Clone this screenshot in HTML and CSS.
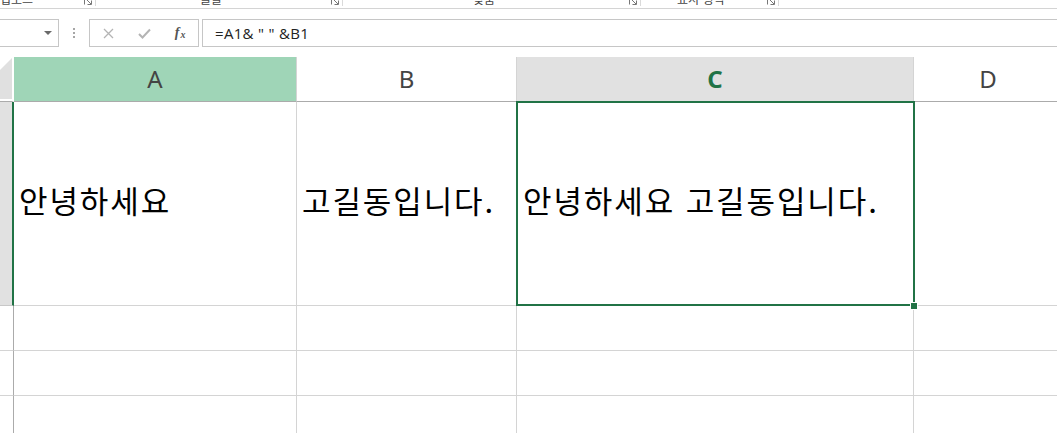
FILE: index.html
```html
<!DOCTYPE html>
<html lang="ko">
<head>
<meta charset="utf-8">
<title>Excel</title>
<link rel="stylesheet" href="styles.css">
</head>
<body>
<div class="ribbon">
  <div class="group g1"><span class="glabel">클립보드</span><span class="launcher"><svg width="8" height="8" viewBox="0 0 8 8"><path d="M0.5 7.5V0.5H7.5M7.5 3.5V7.5H3.5M3 3L7 7" fill="none" stroke="#777" stroke-width="1"/></svg></span></div>
  <div class="group g2"><span class="glabel">글꼴</span><span class="launcher"><svg width="8" height="8" viewBox="0 0 8 8"><path d="M0.5 7.5V0.5H7.5M7.5 3.5V7.5H3.5M3 3L7 7" fill="none" stroke="#777" stroke-width="1"/></svg></span></div>
  <div class="group g3"><span class="glabel">맞춤</span><span class="launcher"><svg width="8" height="8" viewBox="0 0 8 8"><path d="M0.5 7.5V0.5H7.5M7.5 3.5V7.5H3.5M3 3L7 7" fill="none" stroke="#777" stroke-width="1"/></svg></span></div>
  <div class="group g4"><span class="glabel">표시 형식</span><span class="launcher"><svg width="8" height="8" viewBox="0 0 8 8"><path d="M0.5 7.5V0.5H7.5M7.5 3.5V7.5H3.5M3 3L7 7" fill="none" stroke="#777" stroke-width="1"/></svg></span></div>
  <div class="group g5"></div>
</div>

<div class="fbar">
  <div class="namebox"><span class="caret"></span></div>
  <div class="grip"><i></i><i></i><i></i></div>
  <div class="fbtns">
    <span class="fbtn"><svg width="11" height="11" viewBox="0 0 11 11"><path d="M1 1L10 10M10 1L1 10" stroke="#b4b4b4" stroke-width="1.3" fill="none"/></svg></span>
    <span class="fbtn"><svg width="13" height="11" viewBox="0 0 13 11"><path d="M1 6L4.5 9.5L12 1.5" stroke="#b4b4b4" stroke-width="2" fill="none"/></svg></span>
    <span class="fbtn fx"><span class="f">f</span><span class="x">x</span></span>
  </div>
  <div class="finput">=A1&amp; " " &amp;B1</div>
</div>

<div class="sheet">
  <div class="corner"><span class="tri"></span></div>
  <div class="ch sel-col">A</div>
  <div class="ch">B</div>
  <div class="ch active-col">C</div>
  <div class="ch last">D</div>

  <div class="rh active-row"></div>
  <div class="cell tall">안녕하세요</div>
  <div class="cell tall">고길동입니다.</div>
  <div class="cell tall active">안녕하세요 고길동입니다.<span class="handle"></span></div>
  <div class="cell tall last"></div>

  <div class="rh"></div>
  <div class="cell"></div>
  <div class="cell"></div>
  <div class="cell"></div>
  <div class="cell last"></div>

  <div class="rh"></div>
  <div class="cell"></div>
  <div class="cell"></div>
  <div class="cell"></div>
  <div class="cell last"></div>

  <div class="rh"></div>
  <div class="cell"></div>
  <div class="cell"></div>
  <div class="cell"></div>
  <div class="cell last"></div>
</div>
</body>
</html>
```

FILE: styles.css
```css
* { box-sizing: border-box; }

html, body {
  margin: 0;
  padding: 0;
  background: #ffffff;
  overflow: hidden;
}

body {
  width: 1057px;
  height: 433px;
  font-family: "Noto Sans", "Noto Sans CJK KR", sans-serif;
}

/* ---------- ribbon remnant ---------- */
.ribbon {
  height: 9px;
  border-bottom: 1px solid #d4d4d4;
  display: flex;
  align-items: flex-start;
  overflow: hidden;
}

.group {
  height: 6px;
  display: flex;
  align-items: flex-start;
  border-right: 1px solid #dadada;
  overflow: hidden;
}

.g1 { width: 96px; }
.g2 { width: 247px; }
.g3 { width: 298px; }
.g4 { width: 138px; }
.g5 { flex: 1; border-right: none; }

.glabel {
  font-family: "Noto Sans CJK KR", sans-serif;
  font-size: 12px;
  line-height: 12px;
  color: #444;
  margin-top: -7px;
  white-space: nowrap;
}

.g1 .glabel { margin-left: -11px; }
.g2 .glabel { margin-left: 104px; }
.g3 .glabel { margin-left: 130px; }
.g4 .glabel { margin-left: 36px; }

.launcher {
  margin-left: auto;
  margin-right: 3px;
  margin-top: -3px;
  display: flex;
}

/* ---------- formula bar ---------- */
.fbar {
  margin-top: 10px;
  height: 28px;
  display: flex;
}

.namebox {
  width: 60px;
  margin-left: -1px;
  border: 1px solid #c6c6c6;
  display: flex;
  align-items: center;
  justify-content: flex-end;
  padding-right: 6px;
}

.caret {
  width: 0;
  height: 0;
  border-left: 4px solid transparent;
  border-right: 4px solid transparent;
  border-top: 4px solid #6a6a6a;
}

.grip {
  width: 30px;
  display: flex;
  flex-direction: column;
  align-items: center;
  justify-content: center;
  gap: 2px;
}

.grip i {
  display: block;
  width: 2px;
  height: 2px;
  background: #a6a6a6;
}

.fbtns {
  width: 110px;
  border: 1px solid #c6c6c6;
  display: flex;
  align-items: center;
  padding-left: 1px;
}

.fbtn {
  width: 36px;
  display: flex;
  align-items: center;
  justify-content: center;
}

.fx {
  font-family: "Liberation Serif", serif;
  font-style: italic;
  font-weight: bold;
  color: #555;
  font-size: 14px;
  line-height: 14px;
}

.fx .x {
  font-size: 10px;
  margin-left: 1px;
  margin-top: 3px;
}

.finput {
  flex: 1;
  margin-left: 3px;
  margin-right: -10px;
  border: 1px solid #c6c6c6;
  border-right: none;
  padding-left: 12px;
  font-family: "Open Sans", "Noto Sans", sans-serif;
  font-size: 15px;
  letter-spacing: 0.3px;
  line-height: 26px;
  color: #222;
  white-space: pre;
}

/* ---------- sheet grid ---------- */
.sheet {
  margin-top: 10px;
  display: grid;
  grid-template-columns: 14px 283px 220px 397px 1fr;
  grid-template-rows: 45px 204px 45px 45px 45px;
}

.corner {
  border-bottom: 1px solid #ababab;
  border-right: 2px solid #ffffff;
  position: relative;
}

.tri {
  display: block;
  width: 12px;
  height: 42px;
  background: #e0e0e0;
  clip-path: polygon(0 13px, 12px 1px, 12px 100%, 0 100%);
}

.ch {
  border-right: 1px solid #d4d4d4;
  border-bottom: 1px solid #ababab;
  display: flex;
  align-items: center;
  justify-content: center;
  font-family: "Noto Sans", sans-serif;
  font-size: 24px;
  color: #444;
  padding-bottom: 1px;
}

.ch.sel-col { background: #9fd5b7; }

.ch.active-col {
  background: #e1e1e1;
  color: #217346;
  font-weight: bold;
}

.ch.last { border-right: none; padding-left: 5px; }
.cell.last { border-right: none; }

.rh {
  border-right: 1px solid #ababab;
  border-bottom: 1px solid #d4d4d4;
  background: #ffffff;
}

.rh.active-row {
  background: #e1e1e1;
  border-right: 2px solid #217346;
  border-bottom: 1px solid #c8c8c8;
}

.cell {
  border-right: 1px solid #d4d4d4;
  border-bottom: 1px solid #d4d4d4;
  font-family: "Noto Sans CJK KR", sans-serif;
  font-size: 31px;
  letter-spacing: 1.9px;
  color: #000;
  padding-left: 5px;
  display: flex;
  align-items: center;
  white-space: nowrap;
}

.cell.tall { padding-bottom: 8px; }

.cell.active {
  position: relative;
  padding-left: 6px;
}

.cell.active::after {
  content: "";
  position: absolute;
  top: -1px;
  left: -1px;
  right: -2px;
  bottom: -1px;
  border: 2px solid #217346;
  z-index: 2;
}

.handle {
  position: absolute;
  left: 393px;
  top: 200px;
  width: 8px;
  height: 8px;
  background: #217346;
  border: 1px solid #ffffff;
  z-index: 3;
}
```
